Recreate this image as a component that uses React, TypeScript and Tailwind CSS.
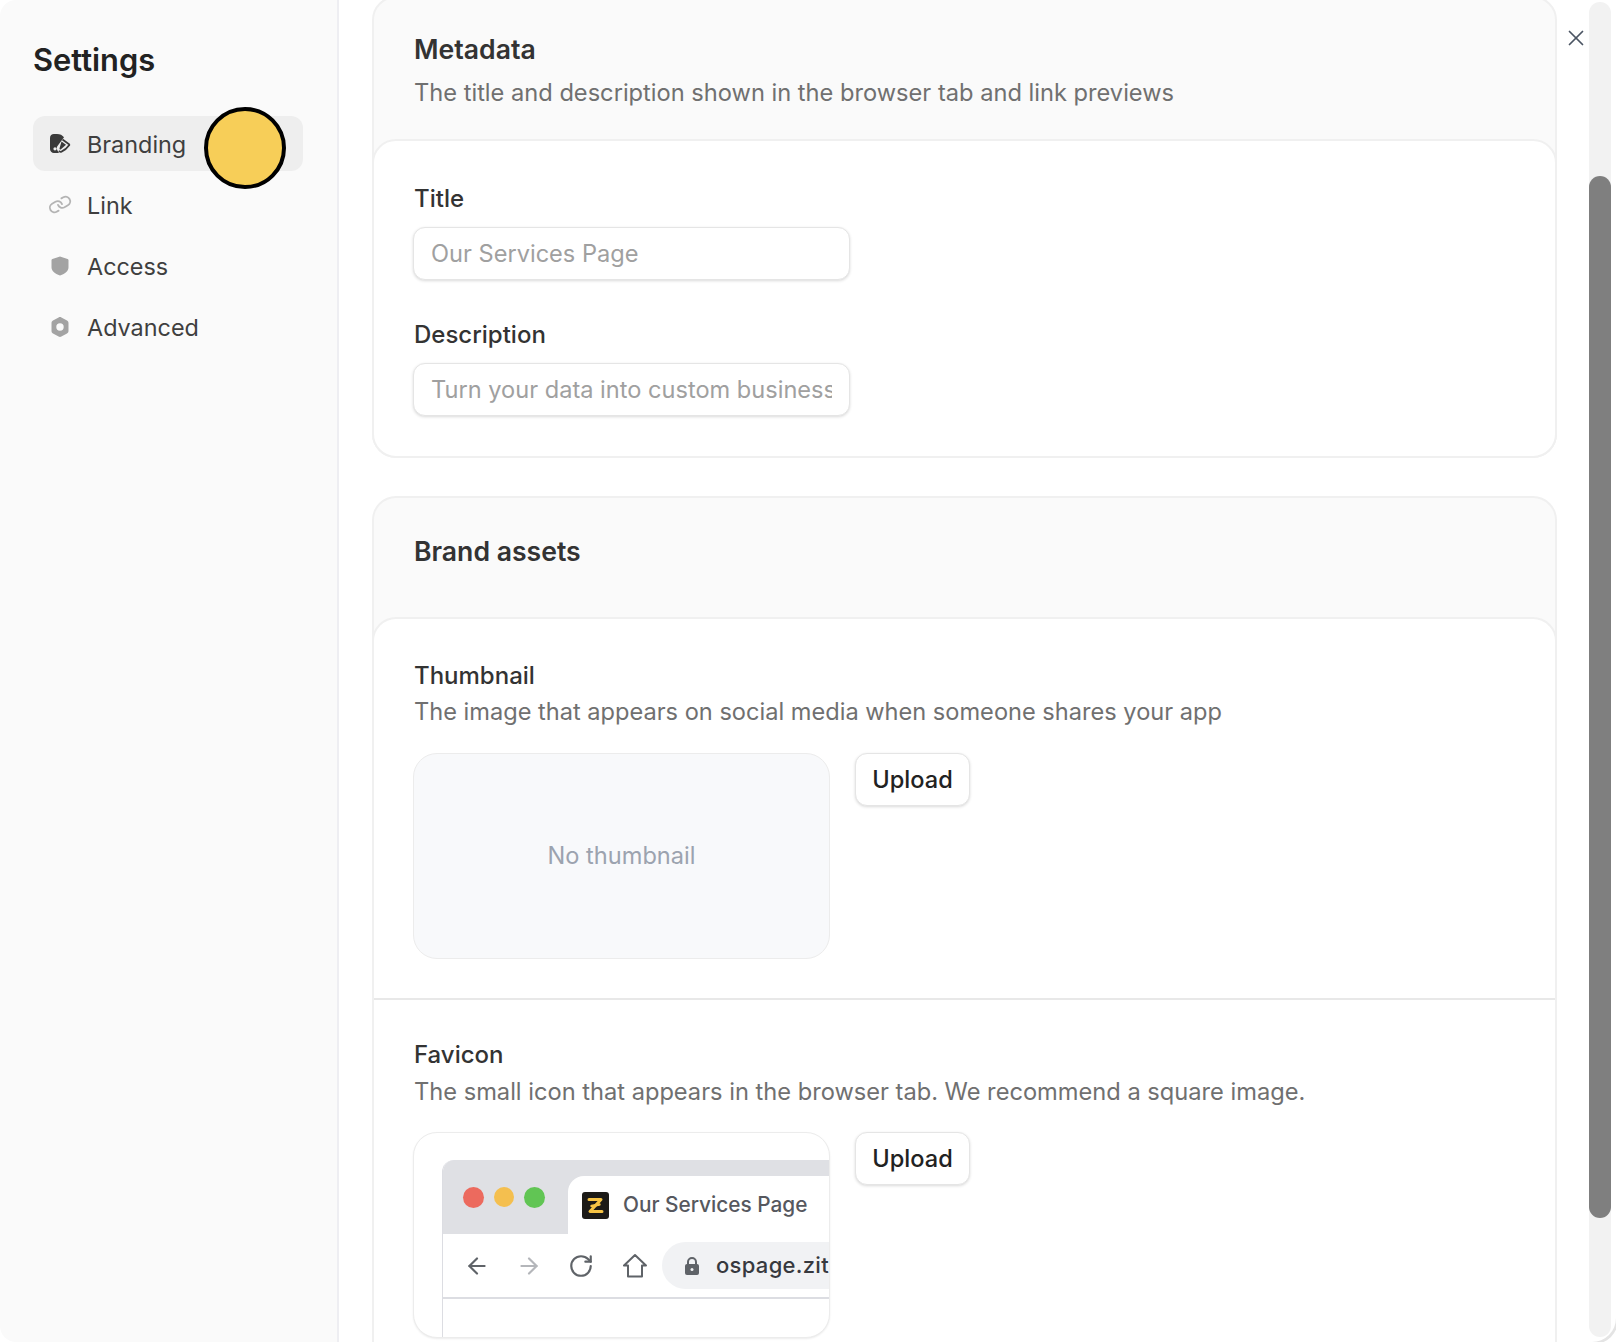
import type { ReactNode } from 'react'
import { X, ArrowLeft, ArrowRight, RotateCw, Link } from 'lucide-react'

function BrandingIcon() {
  return (
    <svg width="22" height="22" viewBox="0 0 22 22" className="text-[#3a3a3a]">
      <path
        fill="currentColor"
        fillRule="evenodd"
        d="M1 5c0-2.500 1.700-4 4-4h3c3 0 5.500 1.200 7 3.300L8.500 13c-1 1.300-1 3 0 4.500L10 20H5c-2.300 0-4-1.700-4-4V5zM6 14.200a1.600 1.600 0 1 0 0 3.200 1.600 1.600 0 0 0 0-3.200z"
      />
      <path
        fill="none"
        stroke="currentColor"
        strokeWidth="1.800"
        strokeLinejoin="round"
        d="M13.500 6.500l6.500 4.700c.4.300.4.800.1 1.100-1.700 2.500-4.600 5-7.600 6.300-1 .4-2 .100-2.500-.8"
      />
      <path fill="currentColor" d="M12.500 8.500l4.500 3.200-5 4.500c-.7.600-1.500 0-1.500-.800z" />
    </svg>
  )
}

function ShieldIcon() {
  return (
    <svg width="22" height="22" viewBox="0 0 22 22">
      <path
        fill="#a3a3a3"
        d="M11 1.500l7.600 2.400c.6.200.9.600.9 1.200v6.900c0 3.800-3 6.700-8.500 8.500-5.500-1.800-8.500-4.700-8.500-8.500V5.100c0-.6.3-1 .9-1.200L11 1.500z"
      />
    </svg>
  )
}

function HexIcon() {
  return (
    <svg width="22" height="22" viewBox="0 0 22 22">
      <path
        fill="#a3a3a3"
        fillRule="evenodd"
        d="M9.600 1.400c.9-.5 1.900-.5 2.800 0l5.600 3.200c.9.500 1.500 1.400 1.500 2.400v8c0 1-.6 1.900-1.500 2.400l-5.600 3.200c-.9.500-1.900.5-2.800 0L4 17.400c-.9-.5-1.500-1.400-1.500-2.400V7c0-1 .6-1.900 1.500-2.400l5.600-3.200zM11 7.300a3.700 3.700 0 1 0 0 7.400 3.700 3.700 0 0 0 0-7.400z"
      />
    </svg>
  )
}

function HomeIcon() {
  return (
    <svg width="26" height="26" viewBox="0 0 26 26" fill="none" stroke="#5f6368" strokeWidth="2" strokeLinejoin="round" className="shrink-0">
      <path d="M13 2L2 12.500H6V23.500H20V12.500H24L13 2Z" />
    </svg>
  )
}

function LockIcon() {
  return (
    <svg width="16" height="18" viewBox="0 0 16 18" className="shrink-0">
      <path fill="none" stroke="#5f6368" strokeWidth="2" d="M4 8V5a4 4 0 0 1 8 0v3" />
      <rect x="1" y="7" width="14" height="11" rx="2" fill="#5f6368" />
      <circle cx="8" cy="12.500" r="1.500" fill="#f1f2f4" />
    </svg>
  )
}

function ZiteLogo() {
  return (
    <div className="w-[27px] h-[27px] rounded-[3px] bg-[#1c1a17] flex items-center justify-center shrink-0">
      <svg width="19" height="19" viewBox="0 0 19 19" fill="none" stroke="#f6c344" strokeWidth="3" strokeLinecap="round" strokeLinejoin="round">
        <path d="M3 3.500H15L4 15.500H16" />
        <path d="M5.500 10L13.500 8.500" strokeWidth="2.400" />
      </svg>
    </div>
  )
}

function NavItem({ icon, label, active }: { icon: ReactNode; label: string; active?: boolean }) {
  return (
    <div className={`flex items-center h-[55px] rounded-[12px] pl-[16px] gap-[16px] ${active ? 'bg-[#eeeeee]' : ''}`}>
      <div className="w-[22px] h-[22px] flex items-center justify-center">{icon}</div>
      <span className="text-[23.400px] text-[#3f3f3f] pt-[3px]">{label}</span>
    </div>
  )
}

function Field({ label, placeholder, className }: { label: string; placeholder: string; className?: string }) {
  return (
    <div className={className}>
      <div className="text-[24px] font-medium text-[#333333] leading-[32px]">{label}</div>
      <input
        readOnly
        placeholder={placeholder}
        className="mt-[12px] -ml-[1px] block w-[437px] h-[53px] rounded-[12px] border border-[#e5e5e5] bg-white px-[17px] text-[23.600px] shadow-[0_1px_3px_rgba(0,0,0,0.15)] outline-none placeholder:text-[#a0a0a0]"
      />
    </div>
  )
}

function UploadButton() {
  return (
    <button className="w-[115px] h-[53px] rounded-[12px] border border-[#e5e5e5] bg-white text-[23.600px] font-medium text-[#222222] shadow-[0_1px_3px_rgba(0,0,0,0.15)]">
      Upload
    </button>
  )
}

function BrowserPreview() {
  return (
    <div className="w-[417px] h-[206px] rounded-[24px] border border-[#ececec] bg-white shadow-[0_1px_2px_rgba(0,0,0,0.08)] overflow-hidden pl-[28px] pt-[27px]">
      <div className="w-[400px] h-[200px] border-l border-[#dcdde2] rounded-tl-[12px] overflow-hidden">
        <div className="h-[74px] bg-[#dfe0e4] flex">
          <div className="w-[125px] flex items-start pt-[27px] pl-[20px] gap-[10px]">
            <span className="w-[21px] h-[21px] rounded-full bg-[#ec6a5e]" />
            <span className="w-[20px] h-[20px] rounded-full bg-[#f4bf4f]" />
            <span className="w-[21px] h-[21px] rounded-full bg-[#61c554]" />
          </div>
          <div className="flex-1 mt-[16px] bg-white rounded-tl-[16px] flex items-center pl-[14px] gap-[14px]">
            <ZiteLogo />
            <span className="text-[20.800px] font-medium text-[#56585e] whitespace-nowrap">Our Services Page</span>
          </div>
        </div>
        <div className="h-[65px] border-b-2 border-[#dcdde2] flex items-center pl-[21px]">
          <ArrowLeft size={26} color="#5f6368" strokeWidth={2} className="shrink-0" />
          <ArrowRight size={26} color="#b4b6ba" strokeWidth={2} className="shrink-0 ml-[26px]" />
          <RotateCw size={26} color="#5f6368" strokeWidth={2} className="shrink-0 ml-[26px]" />
          <div className="ml-[28px] shrink-0"><HomeIcon /></div>
          <div className="ml-[14px] h-[47px] flex-1 min-w-0 rounded-l-full bg-[#f1f2f4] flex items-center pl-[22px] gap-[16px]">
            <LockIcon />
            <span className="text-[22px] font-medium text-[#37393e] tracking-[0.3px] whitespace-nowrap">ospage.zite.com</span>
          </div>
        </div>
      </div>
    </div>
  )
}

export default function App() {
  return (
    <div className="w-[1616px] h-[1342px] flex overflow-hidden bg-white font-['Inter',sans-serif]">
      <aside className="w-[339px] shrink-0 bg-[#fafafa] border-r-2 border-[#eeeef2] rounded-l-[16px] pt-[40px] pl-[33px] pr-[34px]">
        <h1 className="text-[30.800px] font-semibold text-[#222222] leading-[40px]">Settings</h1>
        <nav className="mt-[36px] flex flex-col gap-[6px] relative">
          <NavItem active icon={<BrandingIcon />} label="Branding" />
          <NavItem icon={<Link size={23} color="#b4b4b4" strokeWidth={2} className="rotate-[15deg]" />} label="Link" />
          <NavItem icon={<ShieldIcon />} label="Access" />
          <NavItem icon={<HexIcon />} label="Advanced" />
          {/* click marker from the recording */}
          <div className="absolute left-[171px] top-[-9px] w-[82px] h-[82px] rounded-full bg-[#f7ce58] border-[4px] border-black" />
        </nav>
      </aside>

      <main className="flex-1 min-w-0 pl-[33px] overflow-hidden">
        <section className="-mt-[4px] rounded-[24px] border-2 border-[#f0f0f0] bg-[#fafafa]">
          <div className="h-[141px] pl-[40px] pt-[34px]">
            <h2 className="text-[26.600px] font-semibold text-[#333333] leading-[34px]">Metadata</h2>
            <p className="mt-[11px] text-[23.650px] text-[#707070] leading-[32px]">The title and description shown in the browser tab and link previews</p>
          </div>
          <div className="-mx-[2px] -mb-[2px] h-[319px] rounded-[24px] border-2 border-[#f0f0f0] bg-white pl-[40px] pt-[42px]">
            <Field label="Title" placeholder="Our Services Page" />
            <Field label="Description" placeholder="Turn your data into custom business tools and apps" className="mt-[39px]" />
          </div>
        </section>

        <section className="mt-[38px] rounded-t-[24px] border-2 border-b-0 border-[#f0f0f0] bg-[#fafafa]">
          <div className="h-[119px] pl-[40px] pb-[12px] flex items-center">
            <h2 className="text-[26.600px] font-semibold text-[#333333]">Brand assets</h2>
          </div>
          <div className="-mx-[2px] h-[800px] rounded-t-[24px] border-2 border-b-0 border-[#f0f0f0] bg-white">
            <div className="h-[381px] pl-[40px] pt-[41px] border-b-2 border-[#e8e8e8]">
              <h3 className="text-[24px] font-medium text-[#333333] leading-[32px]">Thumbnail</h3>
              <p className="mt-[4px] text-[23.600px] text-[#707070] leading-[32px]">The image that appears on social media when someone shares your app</p>
              <div className="mt-[25px] -ml-[1px] flex items-start gap-[25px]">
                <div className="w-[417px] h-[206px] rounded-[24px] border border-[#ececec] bg-[#f8f9fb] flex items-center justify-center text-[23.600px] text-[#9ca3af]">
                  No thumbnail
                </div>
                <UploadButton />
              </div>
            </div>
            <div className="pl-[40px] pt-[39px]">
              <h3 className="text-[24px] font-medium text-[#333333] leading-[32px]">Favicon</h3>
              <p className="mt-[5px] text-[23.650px] text-[#707070] leading-[32px]">The small icon that appears in the browser tab. We recommend a square image.</p>
              <div className="mt-[24px] -ml-[1px] flex items-start gap-[25px]">
                <BrowserPreview />
                <UploadButton />
              </div>
            </div>
          </div>
        </section>
      </main>

      <div className="w-[59px] shrink-0 flex rounded-br-[24px] bg-white shadow-[2px_2px_0_#e4e4e4]">
        <button className="w-[32px] h-[76px] flex items-center justify-center pl-[6px]">
          <X size={30} color="#4b5563" strokeWidth={1.600} />
        </button>
        <div className="w-[22px] h-[1335px] mt-[2px] rounded-full bg-[#f2f2f2]">
          <div className="mt-[174px] h-[1042px] rounded-full bg-[#7f7f7f]" />
        </div>
      </div>
    </div>
  )
}
